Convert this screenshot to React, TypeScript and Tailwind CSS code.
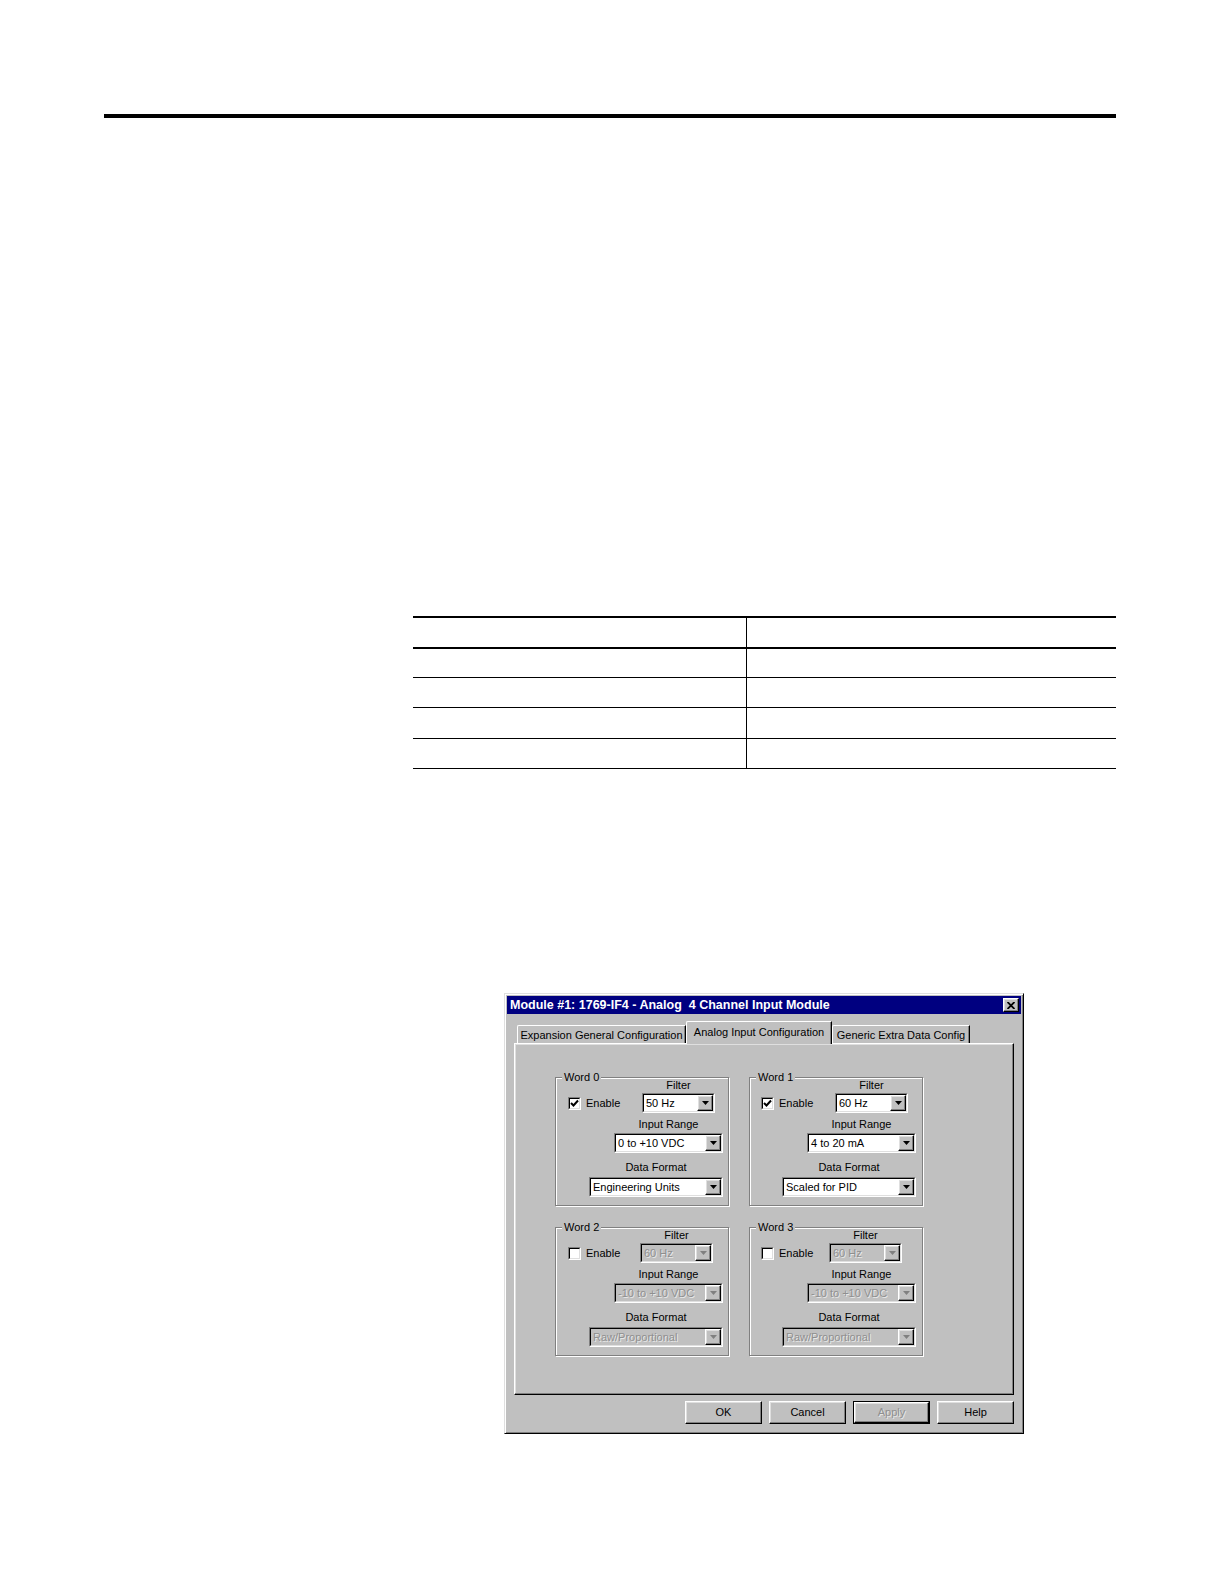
import React from "react";

const raised =
  "border border-t-white border-l-white border-b-black border-r-black shadow-[inset_-1px_-1px_0_#808080,inset_1px_1px_0_#dfdfdf]";

function Arrow({ disabled }: { disabled?: boolean }) {
  return (
    <div className={`w-[16px] h-full bg-[#c0c0c0] flex items-center justify-center ${raised}`}>
      <svg width="7" height="4" viewBox="0 0 7 4">
        <polygon points="0,0 7,0 3.5,4" fill={disabled ? "#808080" : "#000"} />
      </svg>
    </div>
  );
}

function Combo({ w, text, disabled }: { w: string; text: string; disabled?: boolean }) {
  return (
    <div className={`${w} h-[20px] flex border border-t-[#808080] border-l-[#808080] border-b-white border-r-white`}>
      <div
        className={`flex-1 flex border border-t-black border-l-black border-b-[#dfdfdf] border-r-[#dfdfdf] ${
          disabled ? "bg-[#c0c0c0]" : "bg-white"
        }`}
      >
        <div
          className={`flex-1 pl-[2px] text-[11px] leading-[16px] whitespace-nowrap overflow-hidden ${
            disabled ? "text-[#8f8f8f] [text-shadow:1px_1px_0_#e8e8e8]" : "text-black"
          }`}
        >
          {text}
        </div>
        <Arrow disabled={disabled} />
      </div>
    </div>
  );
}

function CheckBox({ checked }: { checked: boolean }) {
  return (
    <div className="w-[13px] h-[13px] border border-t-[#808080] border-l-[#808080] border-b-white border-r-white">
      <div className="w-full h-full bg-white border border-t-black border-l-black border-b-[#dfdfdf] border-r-[#dfdfdf] flex items-center justify-center">
        {checked && (
          <svg width="9" height="9" viewBox="0 0 9 9">
            <polyline points="1,4 3.5,6.5 8,1.5" fill="none" stroke="#000" strokeWidth="2" />
          </svg>
        )}
      </div>
    </div>
  );
}

type GroupProps = {
  title: string;
  checked: boolean;
  disabled?: boolean;
  filter: string;
  range: string;
  format: string;
  filterMr: string;
  restMr: string;
  checkMl: string;
};

function Group(p: GroupProps) {
  return (
    <div className="relative w-[174px] h-[129px] border border-[#808080] shadow-[1px_1px_0_#ffffff,inset_1px_1px_0_#ffffff] flex flex-col pt-[1px]">
      <span className="absolute -top-[8px] left-[6px] px-[2px] bg-[#c0c0c0] text-[11px] leading-[14px] text-black">
        {p.title}
      </span>
      <div className="flex items-end justify-between">
        <div className={`${p.checkMl} h-[20px] flex items-center gap-[5px]`}>
          <CheckBox checked={p.checked} />
          <span className="text-[11px] leading-[14px]">Enable</span>
        </div>
        <div className={`flex flex-col items-center ${p.filterMr}`}>
          <span className="text-[11px] leading-[12px] mb-[2px]">Filter</span>
          <Combo w="w-[73px]" text={p.filter} disabled={p.disabled} />
        </div>
      </div>
      <div className={`self-end flex flex-col items-center mt-[4px] ${p.restMr}`}>
        <span className="text-[11px] leading-[14px] mb-[2px]">Input Range</span>
        <Combo w="w-[109px]" text={p.range} disabled={p.disabled} />
      </div>
      <div className={`self-end flex flex-col items-center mt-[7px] ${p.restMr}`}>
        <span className="text-[11px] leading-[14px] mb-[3px]">Data Format</span>
        <Combo w="w-[134px]" text={p.format} disabled={p.disabled} />
      </div>
    </div>
  );
}

function Tab({ label, w, active }: { label: string; w: string; active?: boolean }) {
  if (active) {
    return (
      <div
        className={`${w} h-[23px] -mb-[1px] relative z-10 bg-[#c0c0c0] border-t border-l border-t-white border-l-white border-r border-r-black shadow-[inset_-1px_0_0_#808080] rounded-tl-[2px] flex items-start justify-center pt-[3px] text-[11px] leading-[14px]`}
      >
        {label}
      </div>
    );
  }
  return (
    <div
      className={`${w} h-[18px] bg-[#c0c0c0] border-t border-l border-t-white border-l-white border-r border-r-black shadow-[inset_-1px_0_0_#808080] rounded-tl-[2px] flex items-start justify-center pt-[2px] text-[11px] leading-[14px]`}
    >
      {label}
    </div>
  );
}

function Button({ label, disabled, outlined }: { label: string; disabled?: boolean; outlined?: boolean }) {
  const inner = (
    <div
      className={`w-full h-full bg-[#c0c0c0] flex items-center justify-center text-[11px] ${raised} ${
        disabled ? "text-[#8f8f8f] [text-shadow:1px_1px_0_#e8e8e8]" : "text-black"
      }`}
    >
      {label}
    </div>
  );
  if (outlined) {
    return <div className="w-[77px] h-[23px] border border-black">{inner}</div>;
  }
  return <div className="w-[77px] h-[23px]">{inner}</div>;
}

export default function App() {
  return (
    <div className="w-[1224px] h-[1584px] bg-white overflow-hidden flex flex-col font-['Liberation_Sans',Arial,sans-serif] text-black">
      <div className="mt-[114px] ml-[104px] w-[1012px] h-[4px] bg-black" />

      <div className="mt-[498px] ml-[413px] w-[703px] border-t-2 border-black">
        <div className="grid grid-cols-[334px_1fr] h-[31px] border-b-2 border-black">
          <div className="border-r border-black" />
          <div />
        </div>
        <div className="grid grid-cols-[334px_1fr] h-[29px] border-b border-black">
          <div className="border-r border-black" />
          <div />
        </div>
        <div className="grid grid-cols-[334px_1fr] h-[30px] border-b border-black">
          <div className="border-r border-black" />
          <div />
        </div>
        <div className="grid grid-cols-[334px_1fr] h-[31px] border-b border-black">
          <div className="border-r border-black" />
          <div />
        </div>
        <div className="grid grid-cols-[334px_1fr] h-[30px] border-b border-black">
          <div className="border-r border-black" />
          <div />
        </div>
      </div>

      <div className="mt-[224px] ml-[504px] w-[520px] h-[441px] bg-[#c0c0c0] border border-t-[#dfdfdf] border-l-[#dfdfdf] border-b-black border-r-black shadow-[inset_1px_1px_0_#ffffff,inset_-1px_-1px_0_#808080] p-[2px] flex flex-col">
        <div className="h-[18px] bg-[#000080] flex items-center justify-between pl-[3px] pr-[2px]">
          <span className="text-white font-bold text-[12.5px] leading-[14px] whitespace-pre">
            Module #1: 1769-IF4 - Analog  4 Channel Input Module
          </span>
          <div className={`w-[16px] h-[14px] bg-[#c0c0c0] flex items-center justify-center ${raised}`}>
            <svg width="8" height="7" viewBox="0 0 8 7">
              <path d="M0.5 0 L7.5 7 M7.5 0 L0.5 7" stroke="#000" strokeWidth="1.8" />
            </svg>
          </div>
        </div>

        <div className="px-[7px] flex flex-col">
          <div className="mt-[7px] h-[22px] flex items-end pl-[3px]">
            <Tab label="Expansion General Configuration" w="w-[169px]" />
            <Tab label="Analog Input Configuration" w="w-[146px]" active />
            <Tab label="Generic Extra Data Config" w="w-[138px]" />
          </div>
          <div className="h-[352px] border border-t-white border-l-white border-b-black border-r-black shadow-[inset_-1px_-1px_0_#808080,inset_1px_1px_0_#dfdfdf] pl-[40px] pt-[33px]">
            <div className="grid grid-cols-[174px_174px] gap-x-[20px] gap-y-[21px]">
              <Group
                title="Word 0"
                checked
                filter="50 Hz"
                range="0 to +10 VDC"
                format="Engineering Units"
                filterMr="mr-[13px]"
                restMr="mr-[5px]"
                checkMl="ml-[12px]"
              />
              <Group
                title="Word 1"
                checked
                filter="60 Hz"
                range="4 to 20 mA"
                format="Scaled for PID"
                filterMr="mr-[14px]"
                restMr="mr-[6px]"
                checkMl="ml-[11px]"
              />
              <Group
                title="Word 2"
                checked={false}
                disabled
                filter="60 Hz"
                range="-10 to +10 VDC"
                format="Raw/Proportional"
                filterMr="mr-[15px]"
                restMr="mr-[5px]"
                checkMl="ml-[12px]"
              />
              <Group
                title="Word 3"
                checked={false}
                disabled
                filter="60 Hz"
                range="-10 to +10 VDC"
                format="Raw/Proportional"
                filterMr="mr-[20px]"
                restMr="mr-[6px]"
                checkMl="ml-[11px]"
              />
            </div>
          </div>
          <div className="mt-[6px] flex justify-end gap-[7px]">
            <Button label="OK" />
            <Button label="Cancel" />
            <Button label="Apply" disabled outlined />
            <Button label="Help" />
          </div>
        </div>
      </div>
    </div>
  );
}
